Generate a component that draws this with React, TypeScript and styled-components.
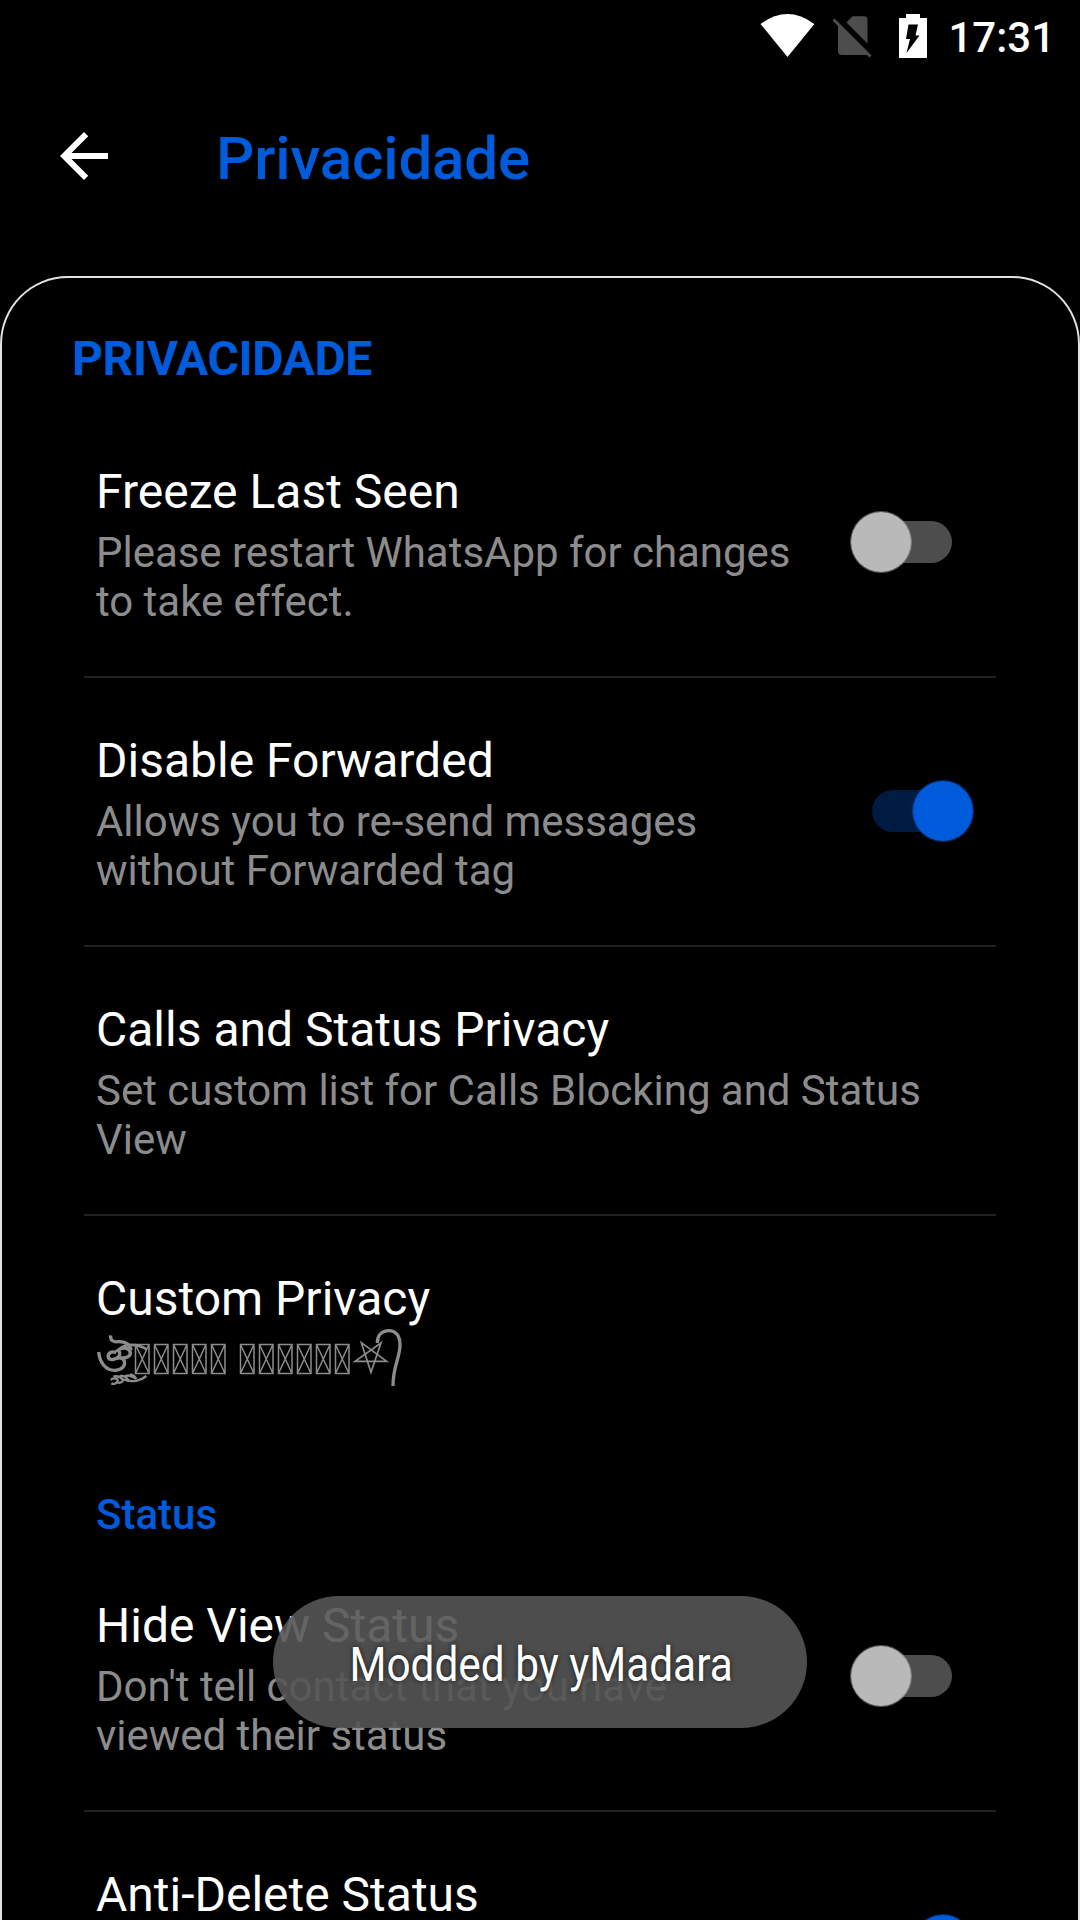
import React from "react";
import styled, { createGlobalStyle } from "styled-components";

const blue = "#005bdb";

const GlobalStyle = createGlobalStyle`
  html, body { margin: 0; background: #000; }
  body { overflow: hidden; font-family: Roboto, "Noto Sans", sans-serif; }
  * { box-sizing: border-box; }
`;

const Screen = styled.div`
  width: 1080px;
  height: 1920px;
  display: flex;
  flex-direction: column;
  background: #000;
  color: #fff;
  overflow: hidden;
  position: relative;
`;

const StatusBar = styled.div`
  height: 72px;
  display: flex;
  align-items: flex-start;
  justify-content: flex-end;
  padding: 0 25px 0 0;
  flex: none;
`;

const StatusIcon = styled.svg<{ $gap: number }>`
  display: block;
  height: 72px;
  margin-right: ${(p) => p.$gap}px;
`;

const Clock = styled.span`
  font-size: 42px;
  font-weight: 500;
  line-height: 49px;
  padding-top: 13px;
`;

const AppBar = styled.header`
  height: 204px;
  flex: none;
  display: flex;
  align-items: flex-start;
  padding: 48px 48px 0;
`;

const BackIcon = styled.svg`
  width: 72px;
  height: 72px;
  fill: #fff;
`;

const AppTitle = styled.h1`
  margin: 4px 0 0 96px;
  font-size: 60px;
  line-height: 70px;
  font-weight: 500;
  letter-spacing: -0.1px;
  color: ${blue};
`;

const Card = styled.main`
  flex: 1;
  border: 2px solid #e2e2df;
  border-bottom: 0;
  border-radius: 68px 68px 0 0;
  padding: 53px 82px 0;
  overflow: hidden;
`;

const CardHeading = styled.h2`
  margin: 0 0 22px -12px;
  font-size: 48px;
  line-height: 56px;
  font-weight: 700;
  letter-spacing: -0.35px;
  color: ${blue};
`;

const Row = styled.div<{ $line?: boolean; $height?: number }>`
  height: ${(p) => p.$height ?? 269}px;
  display: flex;
  justify-content: space-between;
  align-items: flex-start;
  padding: 55px 22px 0 12px;
  border-bottom: ${(p) => (p.$line ? "2px solid #1f1f1f" : "0")};
`;

const Texts = styled.div`
  white-space: nowrap;
`;

const RowTitle = styled.div`
  font-size: 48px;
  line-height: 56px;
`;

const Summary = styled.div`
  margin-top: 8px;
  font-size: 42px;
  line-height: 49px;
  letter-spacing: -0.03px;
  color: #8c8c8c;
`;

const Category = styled.h3`
  margin: 0;
  height: 53px;
  padding-left: 12px;
  font-size: 42px;
  line-height: 49px;
  font-weight: 500;
  color: ${blue};
`;

const SwitchBox = styled.div<{ $on: boolean }>`
  width: 102px;
  height: 62px;
  flex: none;
  margin: 47px ${(p) => (p.$on ? 0 : 22)}px 0 0;
  display: flex;
  align-items: center;
`;

const Rail = styled.div<{ $on: boolean }>`
  width: 86px;
  height: 42px;
  flex: none;
  border-radius: 21px;
  background: ${(p) => (p.$on ? "#001b42" : "#4d4d4d")};
  margin: ${(p) => (p.$on ? "0 -46px 0 0" : "0 0 0 -46px")};
`;

const Knob = styled.div<{ $on: boolean }>`
  width: 62px;
  height: 62px;
  flex: none;
  border-radius: 50%;
  border: 1px solid ${(p) => (p.$on ? "rgba(0, 91, 219, 0.45)" : "rgba(185, 185, 185, 0.45)")};
  background: ${(p) => (p.$on ? blue : "#b9b9b9")};
  background-clip: padding-box;
  z-index: 1;
`;

const Ornament = styled.svg`
  display: block;
  width: 320px;
  height: 68px;
  margin-top: -6px;
  fill: none;
  stroke: #8c8c8c;
`;

const Toast = styled.div`
  position: absolute;
  left: 273px;
  top: 1596px;
  width: 534px;
  height: 132px;
  border-radius: 66px;
  background: rgba(85, 85, 85, 0.91);
  display: flex;
  align-items: center;
  justify-content: center;
`;

const ToastText = styled.span`
  font-size: 48px;
  line-height: 56px;
  padding: 5px 0 0 3px;
  white-space: nowrap;
  transform: scaleX(0.882);
  text-shadow: 0 0 6px rgba(0, 0, 0, 0.7);
`;

function Switch({ on }: { on: boolean }) {
  return (
    <SwitchBox $on={on}>
      {on && <Rail $on />}
      <Knob $on={on} />
      {!on && <Rail $on={false} />}
    </SwitchBox>
  );
}

function Setting(props: {
  title: string;
  lines?: string[];
  on?: boolean;
  line?: boolean;
  height?: number;
  children?: React.ReactNode;
}) {
  return (
    <Row $line={props.line} $height={props.height}>
      <Texts>
        <RowTitle>{props.title}</RowTitle>
        {props.lines && (
          <Summary>
            {props.lines.map((l) => (
              <div key={l}>{l}</div>
            ))}
          </Summary>
        )}
        {props.children}
      </Texts>
      {props.on !== undefined && <Switch on={props.on} />}
    </Row>
  );
}

const boxes = [39, 58, 77, 96, 115, 144, 163, 182, 201, 220, 239];

function NameOrnament() {
  return (
    <Ornament viewBox="96 1321 320 68">
      <g transform="translate(92 1325) scale(0.33333)" strokeWidth="10">
        <path d="M20 81C23 112 40 136 68 136C90 136 101 122 97 109C94 99 84 96 74 101" />
        <path d="M73 83C58 76 46 86 49 97C53 108 72 104 80 95C86 88 83 78 78 76C92 64 113 69 115 83C116 94 102 101 84 98" />
        <path d="M56 31C54 47 65 52 79 50C99 49 116 58 117 76" />
        <path strokeWidth="8" d="M82 73C99 54 139 56 164 73" />
        <g strokeWidth="7">
          <path d="M96 163C120 174 147 167 163 153" />
          <path d="M56 164C66 158 77 160 77 166C76 175 66 179 58 175M64 155C75 151 85 156 91 163M74 172C88 176 96 168 91 160M83 153C95 151 105 157 109 166M101 153C113 147 122 156 131 161M114 148C123 149 129 154 133 162" />
        </g>
      </g>
      {boxes.map((x) => (
        <path key={x} strokeWidth="1.5" d={`M${x + 96.5} 1344.500h13.500v29h-13.500zl13.500 29m0-29l-13.500 29`} />
      ))}
      <g transform="translate(335 1320) scale(0.33333)">
        <path strokeWidth="5" d="M79 68L155 124H60L138 69L108 157Z" />
        <path strokeWidth="10" d="M127 69C127 44 142 32 161 32C184 32 196 50 195 78C194 113 173 145 174 198" />
      </g>
    </Ornament>
  );
}

export default function App() {
  return (
    <Screen>
      <GlobalStyle />
      <StatusBar>
        <StatusIcon $gap={18} width="54" viewBox="760 0 54 72">
          <path fill="#fff" d="M760.5 24Q787.500 4 814.500 24L787.500 57Z" />
        </StatusIcon>
        <StatusIcon $gap={27} width="40" viewBox="832 0 40 72">
          <path fill="#4d4d4d" d="M846.500 22.500L852.500 16.300H864Q867.500 16.300 867.500 20V43.500ZM838 24L868.500 54.500Q867 55 864 55H842Q838 55 838 51Z" />
          <path stroke="#4d4d4d" strokeWidth="3" d="M833.500 19.500L870.500 56.500" />
        </StatusIcon>
        <StatusIcon $gap={21} width="28" viewBox="899 0 28 72">
          <path fill="#fff" d="M906 14H920V18H927V58H899V18H906Z" />
          <path fill="#000" d="M908.500 24.500H918L915.500 35.500H919.500L906.500 53L910 39H906Z" />
        </StatusIcon>
        <Clock>17:31</Clock>
      </StatusBar>
      <AppBar>
        <BackIcon viewBox="0 0 24 24">
          <path d="M20 11H7.830l5.590-5.590L12 4l-8 8 8 8 1.410-1.410L7.830 13H20z" />
        </BackIcon>
        <AppTitle>Privacidade</AppTitle>
      </AppBar>
      <Card>
        <CardHeading>PRIVACIDADE</CardHeading>
        <Setting line on={false} title="Freeze Last Seen" lines={["Please restart WhatsApp for changes", "to take effect."]} />
        <Setting line on title="Disable Forwarded" lines={["Allows you to re-send messages", "without Forwarded tag"]} />
        <Setting line title="Calls and Status Privacy" lines={["Set custom list for Calls Blocking and Status", "View"]} />
        <Setting title="Custom Privacy" height={274}>
          <NameOrnament />
        </Setting>
        <Category>Status</Category>
        <Setting line on={false} title="Hide View Status" lines={["Don't tell contact that you have", "viewed their status"]} />
        <Setting on title="Anti-Delete Status" />
      </Card>
      <Toast>
        <ToastText>Modded by yMadara</ToastText>
      </Toast>
    </Screen>
  );
}
